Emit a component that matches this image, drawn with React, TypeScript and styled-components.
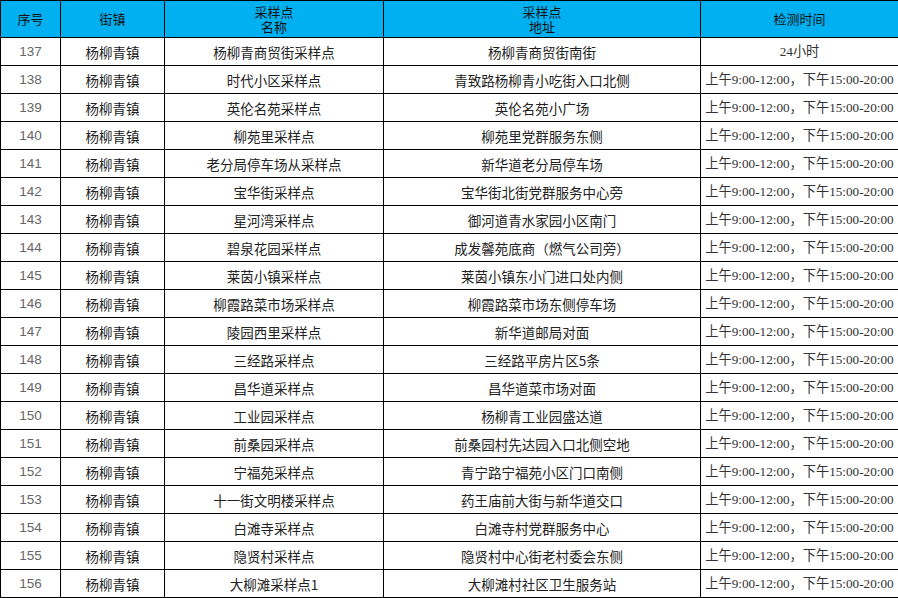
import styled, { createGlobalStyle } from "styled-components";

const GlobalStyle = createGlobalStyle`
  html, body {
    margin: 0;
    padding: 0;
    background: #ffffff;
  }
`;

const TIME = "上午9:00-12:00，下午15:00-20:00";

const rows = [
  { no: 137, name: "杨柳青商贸街采样点", addr: "杨柳青商贸街南街", time: "24小时" },
  { no: 138, name: "时代小区采样点", addr: "青致路杨柳青小吃街入口北侧", time: TIME },
  { no: 139, name: "英伦名苑采样点", addr: "英伦名苑小广场", time: TIME },
  { no: 140, name: "柳苑里采样点", addr: "柳苑里党群服务东侧", time: TIME },
  { no: 141, name: "老分局停车场从采样点", addr: "新华道老分局停车场", time: TIME },
  { no: 142, name: "宝华街采样点", addr: "宝华街北街党群服务中心旁", time: TIME },
  { no: 143, name: "星河湾采样点", addr: "御河道青水家园小区南门", time: TIME },
  { no: 144, name: "碧泉花园采样点", addr: "成发馨苑底商（燃气公司旁）", time: TIME },
  { no: 145, name: "莱茵小镇采样点", addr: "莱茵小镇东小门进口处内侧", time: TIME },
  { no: 146, name: "柳霞路菜市场采样点", addr: "柳霞路菜市场东侧停车场", time: TIME },
  { no: 147, name: "陵园西里采样点", addr: "新华道邮局对面", time: TIME },
  { no: 148, name: "三经路采样点", addr: "三经路平房片区5条", time: TIME },
  { no: 149, name: "昌华道采样点", addr: "昌华道菜市场对面", time: TIME },
  { no: 150, name: "工业园采样点", addr: "杨柳青工业园盛达道", time: TIME },
  { no: 151, name: "前桑园采样点", addr: "前桑园村先达园入口北侧空地", time: TIME },
  { no: 152, name: "宁福苑采样点", addr: "青宁路宁福苑小区门口南侧", time: TIME },
  { no: 153, name: "十一街文明楼采样点", addr: "药王庙前大街与新华道交口", time: TIME },
  { no: 154, name: "白滩寺采样点", addr: "白滩寺村党群服务中心", time: TIME },
  { no: 155, name: "隐贤村采样点", addr: "隐贤村中心街老村委会东侧", time: TIME },
  { no: 156, name: "大柳滩采样点1", addr: "大柳滩村社区卫生服务站", time: TIME },
];

const Table = styled.table`
  width: 898px;
  border-collapse: collapse;
  table-layout: fixed;
  font-family: "Noto Sans CJK SC", "Liberation Sans", sans-serif;
  font-size: 13.5px;
  color: #222;
`;

const HeadCell = styled.th`
  height: 36px;
  padding: 0;
  background: #00b0f0;
  border: 1px solid #000;
  font-weight: 400;
  font-size: 13px;
  line-height: 15.5px;
  text-align: center;
  vertical-align: middle;
  color: #111;
`;

const Cell = styled.td<{ kind?: "num" | "time" }>`
  height: 27px;
  padding: 0;
  border: 1px solid #000;
  text-align: center;
  vertical-align: middle;
  white-space: nowrap;
  overflow: hidden;
  line-height: 16px;
  font-size: ${({ kind }) => (kind === "time" ? "13.2px" : "13.5px")};
  font-family: ${({ kind }) =>
    kind === "num"
      ? `"Liberation Sans", Arial, sans-serif`
      : kind === "time"
      ? `"Liberation Serif", "Noto Sans CJK SC", serif`
      : `"Noto Sans CJK SC", sans-serif`};
  color: ${({ kind }) => (kind === "num" ? "#666" : kind === "time" ? "#333" : "#222")};
`;

export default function App() {
  return (
    <>
      <GlobalStyle />
      <Table>
        <colgroup>
          <col style={{ width: 60 }} />
          <col style={{ width: 104 }} />
          <col style={{ width: 219 }} />
          <col style={{ width: 317 }} />
          <col style={{ width: 198 }} />
        </colgroup>
        <thead>
          <tr>
            <HeadCell>序号</HeadCell>
            <HeadCell>街镇</HeadCell>
            <HeadCell>
              采样点
              <br />
              名称
            </HeadCell>
            <HeadCell>
              采样点
              <br />
              地址
            </HeadCell>
            <HeadCell>检测时间</HeadCell>
          </tr>
        </thead>
        <tbody>
          {rows.map((r) => (
            <tr key={r.no}>
              <Cell kind="num">{r.no}</Cell>
              <Cell>杨柳青镇</Cell>
              <Cell>{r.name}</Cell>
              <Cell>{r.addr}</Cell>
              <Cell kind="time">{r.time}</Cell>
            </tr>
          ))}
        </tbody>
      </Table>
    </>
  );
}
